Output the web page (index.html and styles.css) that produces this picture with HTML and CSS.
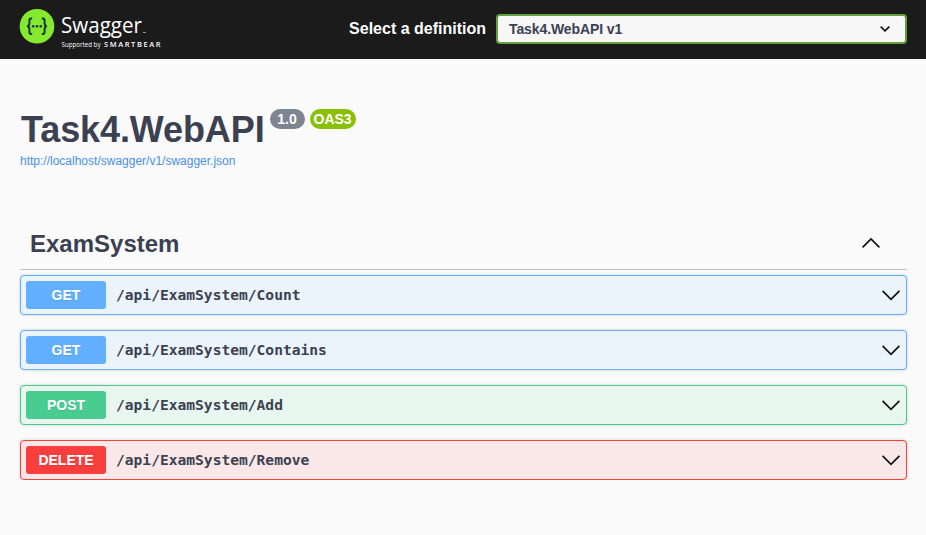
FILE: index.html
```html
<!DOCTYPE html>
<html lang="en">
<head>
<meta charset="utf-8">
<title>Swagger UI</title>
<link rel="stylesheet" href="styles.css">
</head>
<body>
<header class="topbar">
  <a class="logo">
    <svg width="146" height="50" viewBox="0 0 146 50">
      <circle cx="17" cy="21.3" r="17.3" fill="#85ea2d"/>
      <g fill="none" stroke="#173647" stroke-width="2">
        <path d="M12.2 13.500h-1q-1.800 0-1.800 2v3q0 2.700-2.400 2.800q2.400.1 2.400 2.800v3q0 2 1.800 2h1"/>
        <path d="M21.800 13.500h1q1.800 0 1.800 2v3q0 2.700 2.400 2.800q-2.400.1-2.400 2.800v3q0 2-1.800 2h-1"/>
      </g>
      <g fill="#173647"><circle cx="13.200" cy="21.300" r="1.300"/><circle cx="17" cy="21.300" r="1.300"/><circle cx="20.800" cy="21.300" r="1.300"/></g>
      <g fill="#fff">
        <text class="logo-name" x="41" y="28" textLength="81" lengthAdjust="spacingAndGlyphs">Swagger</text>
        <rect x="123" y="27" width="3" height="1" opacity=".5"/>
        <text class="logo-by" x="41.500" y="42" textLength="39" lengthAdjust="spacingAndGlyphs">Supported by</text>
        <text class="logo-brand" x="84" y="42" textLength="56.500">SMARTBEAR</text>
      </g>
    </svg>
  </a>
  <div class="picker">
    <span class="picker-label">Select a definition</span>
    <div class="select">
      <span>Task4.WebAPI v1</span>
      <svg width="10" height="6" viewBox="0 0 10 6"><path d="M.7.700L5 4.800 9.300.700" fill="none" stroke="#111" stroke-width="1.700"/></svg>
    </div>
  </div>
</header>
<main class="page">
  <section class="info">
    <h1 class="title">Task4.WebAPI</h1>
    <span class="badge">1.0</span>
    <span class="badge badge-oas">OAS3</span>
  </section>
  <a class="spec-link">http://localhost/swagger/v1/swagger.json</a>
  <section class="tag">
    <h2>ExamSystem</h2>
    <svg class="chevron" width="18" height="10" viewBox="0 0 18 10"><path d="M.6 9.400L9 1l8.400 8.400"/></svg>
  </section>
  <section class="operations">
    <div class="op get"><span class="method">GET</span><span class="path">/api/ExamSystem/Count</span><svg class="chevron" width="18" height="10" viewBox="0 0 18 10"><path d="M.6.900L9 9.300l8.400-8.400"/></svg></div>
    <div class="op get"><span class="method">GET</span><span class="path">/api/ExamSystem/Contains</span><svg class="chevron" width="18" height="10" viewBox="0 0 18 10"><path d="M.6.900L9 9.300l8.400-8.400"/></svg></div>
    <div class="op post"><span class="method">POST</span><span class="path">/api/ExamSystem/Add</span><svg class="chevron" width="18" height="10" viewBox="0 0 18 10"><path d="M.6.900L9 9.300l8.400-8.400"/></svg></div>
    <div class="op delete"><span class="method">DELETE</span><span class="path">/api/ExamSystem/Remove</span><svg class="chevron" width="18" height="10" viewBox="0 0 18 10"><path d="M.6.900L9 9.300l8.400-8.400"/></svg></div>
  </section>
</main>
</body>
</html>
```
FILE: styles.css
```css
* { box-sizing: border-box; }
body {
  margin: 0;
  background: #fafafa;
  color: #3b4151;
  font-family: "Liberation Sans", Arial, sans-serif;
}
svg { display: block; overflow: visible; }
.topbar {
  height: 59px;
  padding: 0 19px 0 20px;
  background: #1b1b1b;
  display: flex;
  align-items: center;
  justify-content: space-between;
}
.logo { height: 50px; margin-bottom: -1px; }
.logo-name { font: 22.500px "Open Sans", sans-serif; }
.logo-by { font: 6.500px "Open Sans", sans-serif; }
.logo-brand { font: 600 7.500px "Open Sans", sans-serif; }
.picker { display: flex; align-items: center; margin-bottom: 1px; }
.picker-label { color: #fff; font-size: 16px; font-weight: 700; padding-right: 10px; }
.select {
  width: 411px;
  height: 30px;
  padding: 0 15px 0 11px;
  border: 2px solid #62a03f;
  border-radius: 4px;
  background: #f7f7f7;
  display: flex;
  align-items: center;
  justify-content: space-between;
  font-size: 14px;
  font-weight: 700;
  letter-spacing: -.1px;
}
.page { padding: 50px 19px 0 20px; }
.info { display: flex; align-items: flex-start; height: 44px; }
.title { margin: 0 5px 0 1px; font-size: 36px; line-height: 41px; font-weight: 700; letter-spacing: -.1px; }
.badge {
  height: 20px;
  width: 35px;
  margin-right: 5px;
  border-radius: 10px;
  background: #7d8492;
  color: #fff;
  font-size: 14px;
  line-height: 20px;
  font-weight: 700;
  text-align: center;
}
.badge-oas { width: 46px; background: #89bf04; }
.spec-link { display: block; font-size: 12px; line-height: 16px; color: #4990e2; }
.tag {
  height: 53px;
  margin-top: 48px;
  padding: 0 27px 0 10px;
  border-bottom: 1px solid #c0c2c5;
  display: flex;
  align-items: center;
  justify-content: space-between;
}
.tag h2 { margin: 0; padding-top: 2px; font-size: 24px; font-weight: 700; }
.chevron path { fill: none; stroke: #111; stroke-width: 1.700; }
.operations { padding-top: 5px; display: flex; flex-direction: column; gap: 15px; }
.op {
  height: 40px;
  padding: 0 6px 0 5px;
  border: 1px solid;
  border-radius: 4px;
  box-shadow: 0 0 3px rgba(0, 0, 0, .19);
  display: flex;
  align-items: center;
}
.op .chevron { margin-left: auto; }
.method {
  width: 80px;
  height: 28px;
  border-radius: 3px;
  color: #fff;
  font-size: 14px;
  line-height: 28px;
  font-weight: 700;
  text-align: center;
  text-shadow: 0 1px 0 rgba(0, 0, 0, .1);
}
.path { padding: 0 0 2px 10px; font: 700 14.600px "DejaVu Sans Mono", monospace; }
.get { border-color: #61affe; background: #ebf3fb; }
.get .method { background: #61affe; }
.post { border-color: #49cc90; background: #e8f6f0; }
.post .method { background: #49cc90; }
.delete { border-color: #f93e3e; background: #fae7e7; }
.delete .method { background: #f93e3e; }
```
